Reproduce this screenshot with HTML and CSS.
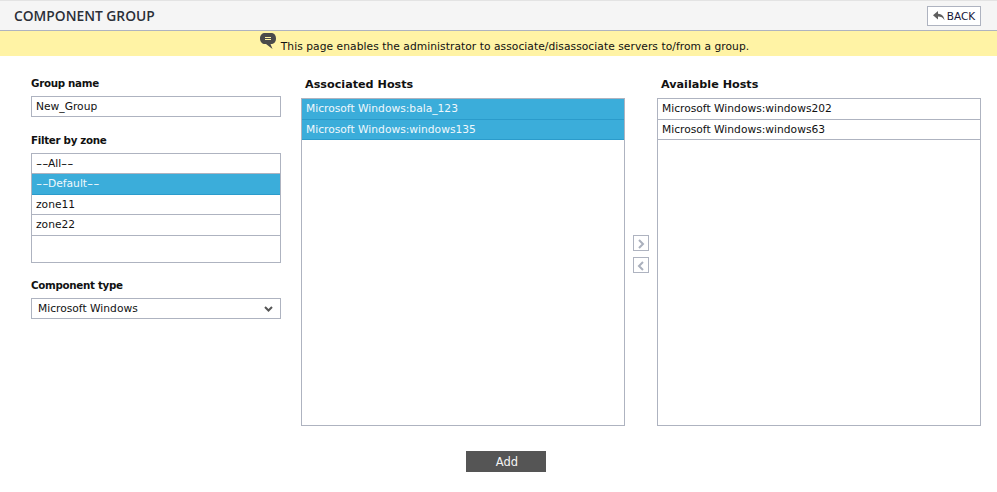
FILE: index.html
```html
<!DOCTYPE html>
<html lang="en">
<head>
<meta charset="utf-8">
<title>Component Group</title>
<link rel="stylesheet" href="styles.css">
</head>
<body>
<header class="titlebar">
  <h1 class="title">COMPONENT GROUP</h1>
  <button class="back" type="button">
    <svg class="back-icon" width="12" height="10" viewBox="0 0 12 10"><path d="M5 0 0 4.200 5 8.400V5.600c3 0 5 1 6.500 3.600C11 5 8.500 2.800 5 2.700Z" fill="#5f5f5f"/></svg>
    BACK
  </button>
</header>
<div class="notice">
  <svg class="notice-icon" width="16" height="16" viewBox="0 0 16 16"><path d="M5 0h6c2.800 0 5 1.800 5 5.500S13.800 11 11 11h-.5L12.500 16 6 11H5C2.200 11 0 9 0 5.500S2.200 0 5 0Z" fill="#4a4a4a"/><path d="M5 4.500h6M5 6.500h6" stroke="#fff3a5" stroke-width="1"/></svg>
  <span class="notice-text">This page enables the administrator to associate/disassociate servers to/from a group.</span>
</div>
<main class="content">
  <section class="side">
    <label class="label label-first">Group name</label>
    <div class="field">New_Group</div>
    <label class="label label-zone">Filter by zone</label>
    <ul class="list zones">
      <li class="item"><span class="dash">--</span>All<span class="dash">--</span></li>
      <li class="item selected"><span class="dash">--</span>Default<span class="dash">--</span></li>
      <li class="item">zone11</li>
      <li class="item">zone22</li>
    </ul>
    <label class="label label-type">Component type</label>
    <div class="select">
      <span>Microsoft Windows</span>
      <svg width="9" height="6" viewBox="0 0 9 6"><path d="M1 1l3.500 3.500L8 1" fill="none" stroke="#555" stroke-width="2"/></svg>
    </div>
  </section>
  <section class="hosts">
    <h2 class="hosts-title">Associated Hosts</h2>
    <ul class="list host-list">
      <li class="item selected">Microsoft Windows:bala_123</li>
      <li class="item selected">Microsoft Windows:windows135</li>
    </ul>
  </section>
  <div class="arrows">
    <button class="arrow" type="button"><svg width="14" height="14" viewBox="0 0 14 14"><path d="M5 3l4 4-4 4" fill="none" stroke="#aab0bd" stroke-width="2"/></svg></button>
    <button class="arrow" type="button"><svg width="14" height="14" viewBox="0 0 14 14"><path d="M9 3 5 7l4 4" fill="none" stroke="#aab0bd" stroke-width="2"/></svg></button>
  </div>
  <section class="hosts">
    <h2 class="hosts-title">Available Hosts</h2>
    <ul class="list host-list">
      <li class="item">Microsoft Windows:windows202</li>
      <li class="item">Microsoft Windows:windows63</li>
    </ul>
  </section>
</main>
<div class="actions"><button class="add" type="button">Add</button></div>
</body>
</html>
```
FILE: styles.css
```css
* { box-sizing: border-box; }
html, body { margin: 0; padding: 0; }
body { width: 997px; height: 492px; overflow: hidden; background: #fff; font-family: "DejaVu Sans", Verdana, sans-serif; font-size: 10.700px; color: #111; }
.titlebar { height: 31px; background: #f5f5f5; border-top: 1px solid #e3e3e3; border-bottom: 1px solid #aeb3c0; display: flex; align-items: center; justify-content: space-between; padding: 0 16px 0 14px; }
.title { margin: 0; font-family: "Open Sans", sans-serif; font-size: 13.800px; font-weight: 600; color: #2b2f38; }
.back { width: 54px; height: 20px; padding: 0; background: #fff; border: 1px solid #aeb3c0; font: 10.500px "DejaVu Sans", sans-serif; color: #16163a; display: flex; align-items: center; justify-content: center; gap: 2px; }
.notice { height: 25px; background: #fff3a5; display: flex; justify-content: center; align-items: flex-start; padding: 2px 0 0 12px; gap: 5px; }
.notice-icon { display: block; }
.notice-text { margin-top: 7px; line-height: 13px; letter-spacing: 0.050px; }
.content { display: flex; padding: 0 16px 0 31px; height: 384px; }
.side { width: 250px; margin-right: 20px; display: flex; flex-direction: column; }
.label { display: block; font-weight: 700; font-size: 10.300px; letter-spacing: -0.300px; line-height: 14px; }
.label-first { margin-top: 20px; }
.label-zone { margin-top: 16px; }
.label-type { margin-top: 15px; }
.field { height: 21px; margin-top: 6px; border: 1px solid #aeb3c0; padding: 0 4px; line-height: 19px; }
.list { list-style: none; margin: 0; padding: 0; border: 1px solid #aeb3c0; }
.zones { height: 110px; margin-top: 6px; }
.item { height: 20.600px; line-height: 19px; padding: 0 4px; border-bottom: 1px solid #aeb3c0; }
.zones .item { height: 20.400px; }
.dash { display: inline-block; width: 12px; transform: scaleX(1.600); transform-origin: left center; }
.selected { background: #3badda; color: #f0f8fc; border-bottom-color: #2b9bcb; }
.select { height: 21px; margin-top: 6px; border: 1px solid #aeb3c0; padding: 0 7px 0 6px; display: flex; align-items: center; justify-content: space-between; }
.hosts { width: 324px; display: flex; flex-direction: column; }
.hosts-title { margin: 21px 0 5px 4px; font-size: 11.200px; font-weight: 700; line-height: 16px; color: #111; }
.host-list { height: 328px; }
.arrows { width: 32px; display: flex; flex-direction: column; align-items: center; gap: 6px; padding-top: 179px; }
.arrow { width: 16px; height: 16px; padding: 1px 0 0; background: #fff; border: 1px solid #aeb3c0; display: flex; align-items: center; justify-content: center; }
.actions { display: flex; justify-content: center; padding-left: 14px; margin-top: 11px; }
.add { width: 80px; height: 21px; padding: 1px 0 0 3px; border: 0; background: #555; color: #f4f4f4; font: 11.500px "DejaVu Sans", sans-serif; }
```
